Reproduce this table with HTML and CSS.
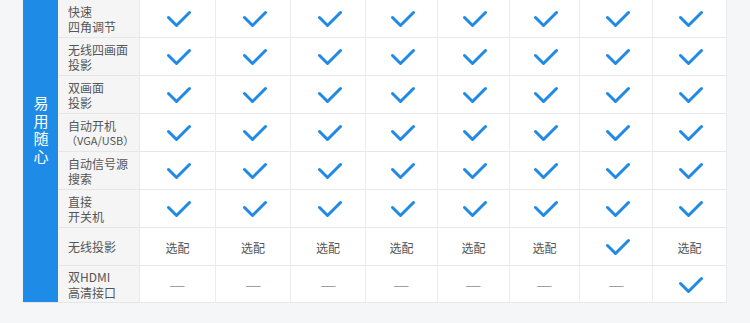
FILE: index.html
```html
<!DOCTYPE html>
<html lang="zh-CN">
<head>
<meta charset="utf-8">
<title>易用随心</title>
<link rel="stylesheet" href="styles.css">
</head>
<body>
<svg width="0" height="0" class="defs" aria-hidden="true">
  <symbol id="ck" viewBox="0 0 25 18">
    <path d="M2.5 7.5 L10.5 15.5 L23.5 2.5" fill="none" stroke="currentColor" stroke-width="3" stroke-linecap="round" stroke-linejoin="round"/>
  </symbol>
</svg>
<div class="page">
  <div class="table">
    <div class="group"><span class="group-text">易用随心</span></div>

    <div class="label">快速<br>四角调节</div>
    <div class="cell"><svg class="check"><use href="#ck"/></svg></div>
    <div class="cell"><svg class="check"><use href="#ck"/></svg></div>
    <div class="cell"><svg class="check"><use href="#ck"/></svg></div>
    <div class="cell"><svg class="check"><use href="#ck"/></svg></div>
    <div class="cell"><svg class="check"><use href="#ck"/></svg></div>
    <div class="cell"><svg class="check"><use href="#ck"/></svg></div>
    <div class="cell"><svg class="check"><use href="#ck"/></svg></div>
    <div class="cell"><svg class="check"><use href="#ck"/></svg></div>

    <div class="label">无线四画面<br>投影</div>
    <div class="cell"><svg class="check"><use href="#ck"/></svg></div>
    <div class="cell"><svg class="check"><use href="#ck"/></svg></div>
    <div class="cell"><svg class="check"><use href="#ck"/></svg></div>
    <div class="cell"><svg class="check"><use href="#ck"/></svg></div>
    <div class="cell"><svg class="check"><use href="#ck"/></svg></div>
    <div class="cell"><svg class="check"><use href="#ck"/></svg></div>
    <div class="cell"><svg class="check"><use href="#ck"/></svg></div>
    <div class="cell"><svg class="check"><use href="#ck"/></svg></div>

    <div class="label">双画面<br>投影</div>
    <div class="cell"><svg class="check"><use href="#ck"/></svg></div>
    <div class="cell"><svg class="check"><use href="#ck"/></svg></div>
    <div class="cell"><svg class="check"><use href="#ck"/></svg></div>
    <div class="cell"><svg class="check"><use href="#ck"/></svg></div>
    <div class="cell"><svg class="check"><use href="#ck"/></svg></div>
    <div class="cell"><svg class="check"><use href="#ck"/></svg></div>
    <div class="cell"><svg class="check"><use href="#ck"/></svg></div>
    <div class="cell"><svg class="check"><use href="#ck"/></svg></div>

    <div class="label">自动开机<br><span class="small">（VGA/USB）</span></div>
    <div class="cell"><svg class="check"><use href="#ck"/></svg></div>
    <div class="cell"><svg class="check"><use href="#ck"/></svg></div>
    <div class="cell"><svg class="check"><use href="#ck"/></svg></div>
    <div class="cell"><svg class="check"><use href="#ck"/></svg></div>
    <div class="cell"><svg class="check"><use href="#ck"/></svg></div>
    <div class="cell"><svg class="check"><use href="#ck"/></svg></div>
    <div class="cell"><svg class="check"><use href="#ck"/></svg></div>
    <div class="cell"><svg class="check"><use href="#ck"/></svg></div>

    <div class="label">自动信号源<br>搜索</div>
    <div class="cell"><svg class="check"><use href="#ck"/></svg></div>
    <div class="cell"><svg class="check"><use href="#ck"/></svg></div>
    <div class="cell"><svg class="check"><use href="#ck"/></svg></div>
    <div class="cell"><svg class="check"><use href="#ck"/></svg></div>
    <div class="cell"><svg class="check"><use href="#ck"/></svg></div>
    <div class="cell"><svg class="check"><use href="#ck"/></svg></div>
    <div class="cell"><svg class="check"><use href="#ck"/></svg></div>
    <div class="cell"><svg class="check"><use href="#ck"/></svg></div>

    <div class="label">直接<br>开关机</div>
    <div class="cell"><svg class="check"><use href="#ck"/></svg></div>
    <div class="cell"><svg class="check"><use href="#ck"/></svg></div>
    <div class="cell"><svg class="check"><use href="#ck"/></svg></div>
    <div class="cell"><svg class="check"><use href="#ck"/></svg></div>
    <div class="cell"><svg class="check"><use href="#ck"/></svg></div>
    <div class="cell"><svg class="check"><use href="#ck"/></svg></div>
    <div class="cell"><svg class="check"><use href="#ck"/></svg></div>
    <div class="cell"><svg class="check"><use href="#ck"/></svg></div>

    <div class="label">无线投影</div>
    <div class="cell">选配</div>
    <div class="cell">选配</div>
    <div class="cell">选配</div>
    <div class="cell">选配</div>
    <div class="cell">选配</div>
    <div class="cell">选配</div>
    <div class="cell"><svg class="check"><use href="#ck"/></svg></div>
    <div class="cell">选配</div>

    <div class="label">双HDMI<br>高清接口</div>
    <div class="cell"><span class="dash">—</span></div>
    <div class="cell"><span class="dash">—</span></div>
    <div class="cell"><span class="dash">—</span></div>
    <div class="cell"><span class="dash">—</span></div>
    <div class="cell"><span class="dash">—</span></div>
    <div class="cell"><span class="dash">—</span></div>
    <div class="cell"><span class="dash">—</span></div>
    <div class="cell"><svg class="check"><use href="#ck"/></svg></div>
  </div>
</div>
</body>
</html>
```

FILE: styles.css
```css
html, body {
  margin: 0;
  padding: 0;
  background: #f5f6f8;
}
.defs {
  position: absolute;
  width: 0;
  height: 0;
  overflow: hidden;
}
.page {
  padding: 0 23px;
  font-family: "Noto Sans CJK SC", "Noto Sans", sans-serif;
}
.table {
  display: grid;
  grid-template-columns: 35px 82px 76px 75px 75px 72px 72px 70px 73px 74px;
  grid-template-rows: repeat(7, 38px) 37px;
  width: 704px;
}
.group {
  grid-row: 1 / span 8;
  grid-column: 1;
  background: #1e8ce6;
  border-bottom: 1px solid #e3e7ec;
  box-sizing: border-box;
  display: flex;
  align-items: center;
  justify-content: center;
  padding-bottom: 40px;
}
.group-text {
  writing-mode: vertical-rl;
  color: #ffffff;
  font-size: 15px;
  line-height: 20px;
  letter-spacing: 2.5px;
}
.label {
  background: #f5f5f5;
  border-right: 1px solid #e9e9e9;
  border-bottom: 1px solid #e6e6e6;
  box-sizing: border-box;
  display: flex;
  flex-direction: column;
  justify-content: center;
  padding: 1px 0 0 10px;
  font-size: 12px;
  line-height: 15.5px;
  color: #555555;
  white-space: nowrap;
}
.small {
  font-size: 11px;
  margin-left: -2px;
}
.cell {
  background: #ffffff;
  border-right: 1px solid #ececec;
  border-bottom: 1px solid #e8e8e8;
  box-sizing: border-box;
  display: flex;
  align-items: center;
  justify-content: center;
  padding-top: 1px;
  font-size: 12px;
  color: #555555;
}
.check {
  width: 25px;
  height: 18px;
  color: #1e8ae6;
  margin-left: 2px;
}
.dash {
  color: #888888;
  font-size: 12px;
  display: inline-block;
  transform: scaleX(1.5);
}
```
